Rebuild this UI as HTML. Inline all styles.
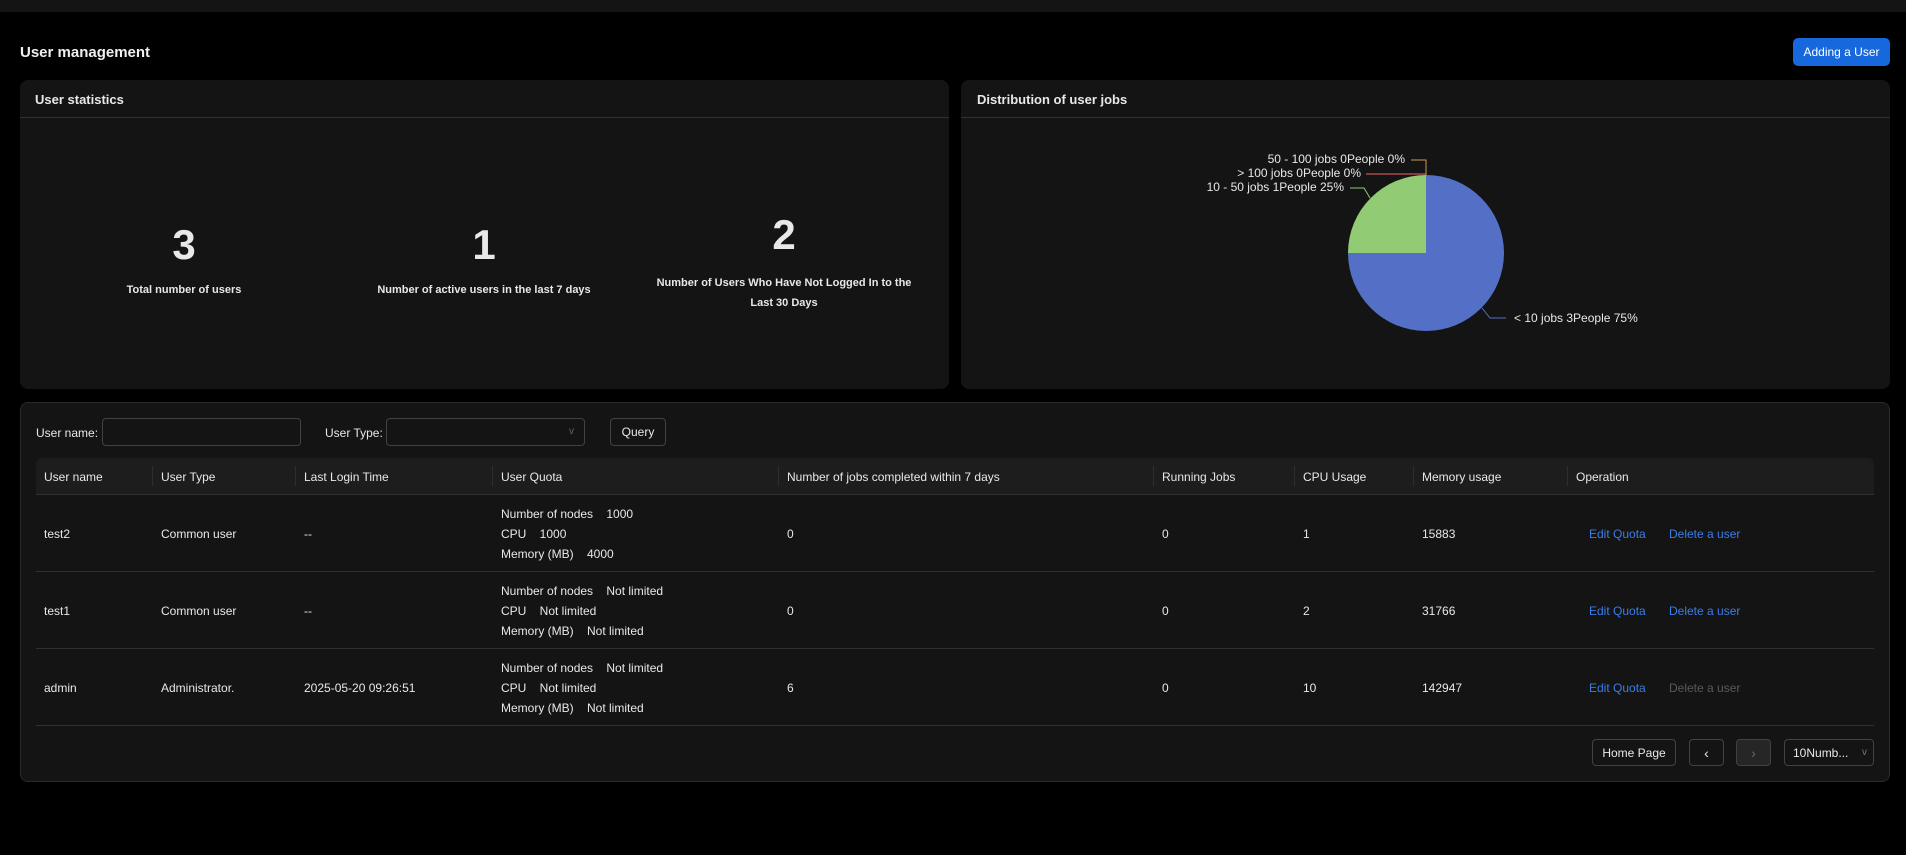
<!DOCTYPE html>
<html><head><meta charset="utf-8"><style>
*{margin:0;padding:0;box-sizing:border-box}
body{width:1906px;height:855px;background:#000;font-family:"Liberation Sans",sans-serif;color:#e8e8e8;position:relative;overflow:hidden;font-size:12px}
.abs{position:absolute}
.topbar{left:0;top:0;width:1906px;height:12px;background:#141414}
.card{background:#141414;border-radius:8px}
.hd{font-size:13px;font-weight:bold;color:#e8e8e8}
.line{height:1px;background:#303030}
.btn{border:1px solid #424242;border-radius:4px;background:#141414;color:#e8e8e8;display:flex;align-items:center;justify-content:center;font-size:12px}
.inp{border:1px solid #424242;border-radius:4px;background:#141414}
.t{position:absolute;white-space:nowrap;font-size:12px;line-height:14px}
.sep{position:absolute;width:1px;height:20px;background:#2e2e2e;top:466px}
.link{color:#3b7de8}
</style></head><body>
<div class="abs topbar"></div>
<div class="abs" style="left:20px;top:44px;font-size:15px;font-weight:bold;color:#f0f0f0">User management</div>
<div class="abs" style="left:1793px;top:38px;width:97px;height:28px;background:#1668dc;border-radius:5px;color:#fff;font-size:12px;display:flex;align-items:center;justify-content:center">Adding a User</div>

<div class="abs card" style="left:20px;top:80px;width:929px;height:309px"></div>
<div class="abs hd" style="left:35px;top:92px">User statistics</div>
<div class="abs line" style="left:20px;top:117px;width:929px"></div>
<div class="abs" style="left:84px;top:222px;width:200px;text-align:center;font-size:42px;font-weight:bold;line-height:46px">3</div>
<div class="abs" style="left:84px;top:284px;width:200px;text-align:center;font-size:11px;font-weight:bold">Total number of users</div>
<div class="abs" style="left:384px;top:222px;width:200px;text-align:center;font-size:42px;font-weight:bold;line-height:46px">1</div>
<div class="abs" style="left:334px;top:284px;width:300px;text-align:center;font-size:11px;font-weight:bold">Number of active users in the last 7 days</div>
<div class="abs" style="left:684px;top:212px;width:200px;text-align:center;font-size:42px;font-weight:bold;line-height:46px">2</div>
<div class="abs" style="left:634px;top:273px;width:300px;text-align:center;font-size:11px;font-weight:bold;line-height:20px">Number of Users Who Have Not Logged In to the<br>Last 30 Days</div>

<div class="abs card" style="left:961px;top:80px;width:929px;height:309px"></div>
<div class="abs hd" style="left:977px;top:92px">Distribution of user jobs</div>
<div class="abs line" style="left:961px;top:117px;width:929px"></div>
<svg class="abs" style="left:961px;top:117px" width="929" height="272">
<g transform="translate(-961,-117)">
<path d="M1426 253 L1426 175 A78 78 0 1 1 1348 253 Z" fill="#5470c6"/>
<path d="M1426 253 L1348 253 A78 78 0 0 1 1426 175 Z" fill="#91cc75"/>
<polyline points="1411,160 1426,160 1426,175" fill="none" stroke="#c9a145" stroke-width="1"/>
<line x1="1366" y1="174" x2="1426" y2="174" stroke="#ee6666"/>
<polyline points="1350,188 1364,188 1370,198" fill="none" stroke="#91cc75"/>
<polyline points="1482,308 1490,318 1506,318" fill="none" stroke="#5470c6"/>
<g font-family="Liberation Sans, sans-serif" font-size="12" fill="#e8e8e8">
<text x="1405" y="163" text-anchor="end">50 - 100 jobs 0People 0%</text>
<text x="1361" y="177" text-anchor="end">&gt; 100 jobs 0People 0%</text>
<text x="1344" y="191" text-anchor="end">10 - 50 jobs 1People 25%</text>
<text x="1514" y="322">&lt; 10 jobs 3People 75%</text>
</g></g></svg>

<div class="abs card" style="left:20px;top:402px;width:1870px;height:380px;border:1px solid #2a2a2a"></div>
<div class="t" style="left:36px;top:426px">User name:</div>
<div class="abs inp" style="left:102px;top:418px;width:199px;height:28px"></div>
<div class="t" style="left:325px;top:426px">User Type:</div>
<div class="abs inp" style="left:386px;top:418px;width:199px;height:28px"></div>
<div class="t" style="left:569px;top:425px;color:#666;font-size:10px">v</div>
<div class="abs btn" style="left:610px;top:418px;width:56px;height:28px">Query</div>

<div class="abs" style="left:36px;top:458px;width:1838px;height:37px;background:#1d1d1d;border-radius:6px 6px 0 0;border-bottom:1px solid #303030"></div>
<div class="sep" style="left:152px"></div><div class="sep" style="left:295px"></div><div class="sep" style="left:492px"></div><div class="sep" style="left:778px"></div><div class="sep" style="left:1153px"></div><div class="sep" style="left:1294px"></div><div class="sep" style="left:1413px"></div><div class="sep" style="left:1567px"></div>
<div class="t" style="left:44px;top:470px">User name</div>
<div class="t" style="left:161px;top:470px">User Type</div>
<div class="t" style="left:304px;top:470px">Last Login Time</div>
<div class="t" style="left:501px;top:470px">User Quota</div>
<div class="t" style="left:787px;top:470px">Number of jobs completed within 7 days</div>
<div class="t" style="left:1162px;top:470px">Running Jobs</div>
<div class="t" style="left:1303px;top:470px">CPU Usage</div>
<div class="t" style="left:1422px;top:470px">Memory usage</div>
<div class="t" style="left:1576px;top:470px">Operation</div>

<div class="abs line" style="left:36px;top:571px;width:1838px"></div>
<div class="abs line" style="left:36px;top:648px;width:1838px"></div>
<div class="abs line" style="left:36px;top:725px;width:1838px"></div>

<!-- row1 -->
<div class="t" style="left:44px;top:527px">test2</div>
<div class="t" style="left:161px;top:527px">Common user</div>
<div class="t" style="left:304px;top:527px">--</div>
<div class="t" style="left:501px;top:507px">Number of nodes&nbsp;&nbsp;&nbsp; 1000</div>
<div class="t" style="left:501px;top:527px">CPU&nbsp;&nbsp;&nbsp; 1000</div>
<div class="t" style="left:501px;top:547px">Memory (MB)&nbsp;&nbsp;&nbsp; 4000</div>
<div class="t" style="left:787px;top:527px">0</div>
<div class="t" style="left:1162px;top:527px">0</div>
<div class="t" style="left:1303px;top:527px">1</div>
<div class="t" style="left:1422px;top:527px">15883</div>
<div class="t link" style="left:1589px;top:527px">Edit Quota</div>
<div class="t link" style="left:1669px;top:527px">Delete a user</div>
<!-- row2 -->
<div class="t" style="left:44px;top:604px">test1</div>
<div class="t" style="left:161px;top:604px">Common user</div>
<div class="t" style="left:304px;top:604px">--</div>
<div class="t" style="left:501px;top:584px">Number of nodes&nbsp;&nbsp;&nbsp; Not limited</div>
<div class="t" style="left:501px;top:604px">CPU&nbsp;&nbsp;&nbsp; Not limited</div>
<div class="t" style="left:501px;top:624px">Memory (MB)&nbsp;&nbsp;&nbsp; Not limited</div>
<div class="t" style="left:787px;top:604px">0</div>
<div class="t" style="left:1162px;top:604px">0</div>
<div class="t" style="left:1303px;top:604px">2</div>
<div class="t" style="left:1422px;top:604px">31766</div>
<div class="t link" style="left:1589px;top:604px">Edit Quota</div>
<div class="t link" style="left:1669px;top:604px">Delete a user</div>
<!-- row3 -->
<div class="t" style="left:44px;top:681px">admin</div>
<div class="t" style="left:161px;top:681px">Administrator.</div>
<div class="t" style="left:304px;top:681px">2025-05-20 09:26:51</div>
<div class="t" style="left:501px;top:661px">Number of nodes&nbsp;&nbsp;&nbsp; Not limited</div>
<div class="t" style="left:501px;top:681px">CPU&nbsp;&nbsp;&nbsp; Not limited</div>
<div class="t" style="left:501px;top:701px">Memory (MB)&nbsp;&nbsp;&nbsp; Not limited</div>
<div class="t" style="left:787px;top:681px">6</div>
<div class="t" style="left:1162px;top:681px">0</div>
<div class="t" style="left:1303px;top:681px">10</div>
<div class="t" style="left:1422px;top:681px">142947</div>
<div class="t link" style="left:1589px;top:681px">Edit Quota</div>
<div class="t" style="left:1669px;top:681px;color:#5a5a5a">Delete a user</div>

<div class="abs btn" style="left:1592px;top:739px;width:84px;height:27px">Home Page</div>
<div class="abs btn" style="left:1689px;top:739px;width:35px;height:27px;font-size:14px">&#8249;</div>
<div class="abs btn" style="left:1736px;top:739px;width:35px;height:27px;background:#262626;color:#666;font-size:14px">&#8250;</div>
<div class="abs btn" style="left:1784px;top:739px;width:90px;height:27px;justify-content:flex-start;padding-left:8px">10Numb...<span style="position:absolute;right:6px;color:#777;font-size:10px">v</span></div>
</body></html>
